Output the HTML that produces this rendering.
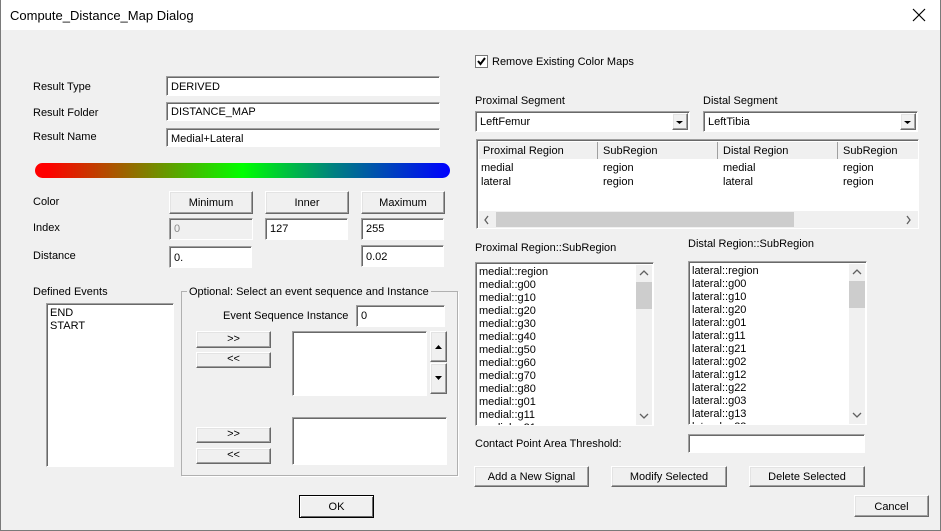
<!DOCTYPE html>
<html><head><meta charset="utf-8"><style>
*{box-sizing:border-box;margin:0;padding:0}
body{width:941px;height:531px;overflow:hidden;background:#f0f0f0;font-family:"Liberation Sans",sans-serif;font-size:11px;color:#000;position:relative}
.a{position:absolute;white-space:nowrap}
.win{position:absolute;left:0;top:0;width:941px;height:531px;border:1px solid #7a7a7a;border-top:none}
.title{position:absolute;left:0;top:0;width:940px;height:30px;background:#fff}
.in{position:absolute;background:#fff;border:1px solid;border-color:#a0a0a0 #fff #fff #a0a0a0;box-shadow:inset 1px 1px 0 #696969;padding:4px 0 0 4px}
.btn{position:absolute;background:#f0f0f0;border:1px solid;border-color:#fff #696969 #696969 #fff;box-shadow:inset -1px -1px 0 #a0a0a0, inset 1px 1px 0 #e3e3e3;text-align:center}
.lst{position:absolute;background:#fff;border:1px solid;border-color:#a0a0a0 #fff #fff #a0a0a0;box-shadow:inset 1px 1px 0 #696969;overflow:hidden}
.lst div{line-height:13px;padding-left:3px}
.sb{position:absolute;background:#f0f0f0}
</style></head><body>
<div class="title"></div>
<div class="a" style="left:10px;top:8px;font-size:13px">Compute_Distance_Map Dialog</div>
<svg class="a" style="left:912px;top:8px" width="14" height="14"><path d="M1 1L13 13M13 1L1 13" stroke="#000" stroke-width="1.2"/></svg>
<div class="win"></div>

<div class="a" style="left:33px;top:81px">Result Type</div>
<div class="a" style="left:33px;top:107px">Result Folder</div>
<div class="a" style="left:33px;top:131px">Result Name</div>
<div class="in" style="left:166px;top:76px;width:274px;height:20px">DERIVED</div>
<div class="in" style="left:166px;top:102px;width:274px;height:19px;padding-top:3px">DISTANCE_MAP</div>
<div class="in" style="left:166px;top:128px;width:274px;height:19px;padding-top:4px">Medial+Lateral</div>
<div class="a" style="left:35px;top:163px;width:415px;height:15px;border-radius:8px;background:linear-gradient(90deg,#f00 0%,#f00 3%,#808000 27%,#0f0 50%,#008080 72%,#00f 100%)"></div>

<div class="a" style="left:33px;top:196px">Color</div>
<div class="a" style="left:33px;top:222px">Index</div>
<div class="a" style="left:33px;top:250px">Distance</div>
<div class="btn" style="left:169px;top:191px;width:84px;height:23px;padding-top:5px">Minimum</div>
<div class="btn" style="left:265px;top:191px;width:84px;height:23px;padding-top:5px">Inner</div>
<div class="btn" style="left:361px;top:191px;width:84px;height:23px;padding-top:5px">Maximum</div>
<div class="in" style="left:169px;top:218px;width:84px;height:22px;background:#f0f0f0;color:#8a8a8a">0</div>
<div class="in" style="left:265px;top:218px;width:83px;height:22px">127</div>
<div class="in" style="left:361px;top:218px;width:83px;height:22px">255</div>
<div class="in" style="left:169px;top:246px;width:83px;height:22px;padding-top:5px">0.</div>
<div class="in" style="left:361px;top:245px;width:83px;height:22px;padding-top:5px">0.02</div>

<div class="a" style="left:33px;top:286px">Defined Events</div>
<div class="lst" style="left:46px;top:303px;width:128px;height:164px;padding-top:3px"><div>END</div><div>START</div></div>

<div class="a" style="left:181px;top:291px;width:277px;height:185px;border:1px solid #b0b0b0;box-shadow:1px 1px 0 #fff"></div>
<div class="a" style="left:187px;top:286px;background:#f0f0f0;padding:0 2px">Optional: Select an event sequence and Instance</div>
<div class="a" style="left:223px;top:310px">Event Sequence Instance</div>
<div class="in" style="left:356px;top:305px;width:89px;height:22px">0</div>
<div class="btn" style="left:196px;top:331px;width:75px;height:17px;line-height:14px">&gt;&gt;</div>
<div class="btn" style="left:196px;top:352px;width:75px;height:16px;line-height:13px">&lt;&lt;</div>
<div class="lst" style="left:292px;top:331px;width:135px;height:65px"></div>
<div class="btn" style="left:430px;top:331px;width:17px;height:31px"><svg width="15" height="29"><path d="M4 17L11 17L7.5 13Z" fill="#000"/></svg></div>
<div class="btn" style="left:430px;top:363px;width:17px;height:31px"><svg width="15" height="29"><path d="M4 12L11 12L7.5 16Z" fill="#000"/></svg></div>
<div class="btn" style="left:196px;top:427px;width:75px;height:16px;line-height:13px">&gt;&gt;</div>
<div class="btn" style="left:196px;top:448px;width:75px;height:16px;line-height:13px">&lt;&lt;</div>
<div class="lst" style="left:292px;top:417px;width:155px;height:48px"></div>
<div class="btn" style="left:299px;top:495px;width:75px;height:23px;padding-top:5px;border-color:#000;box-shadow:inset 1px 1px 0 #fff,inset -1px -1px 0 #696969">OK</div>

<svg class="a" style="left:475px;top:55px" width="13" height="13"><rect x="0.5" y="0.5" width="12" height="12" fill="#fff" stroke="#777"/><path d="M3 6L5.5 9L10 3" stroke="#000" stroke-width="2" fill="none"/></svg>
<div class="a" style="left:492px;top:56px">Remove Existing Color Maps</div>

<div class="a" style="left:475px;top:95px">Proximal Segment</div>
<div class="a" style="left:703px;top:95px">Distal Segment</div>
<div class="in" style="left:475px;top:111px;width:215px;height:21px">LeftFemur</div>
<div class="btn" style="left:672px;top:113px;width:16px;height:17px"><svg width="14" height="15"><path d="M3 7L10 7L6.5 10Z" fill="#000"/></svg></div>
<div class="in" style="left:703px;top:111px;width:215px;height:21px">LeftTibia</div>
<div class="btn" style="left:900px;top:113px;width:16px;height:17px"><svg width="14" height="15"><path d="M3 7L10 7L6.5 10Z" fill="#000"/></svg></div>

<div class="lst" style="left:476px;top:139px;width:443px;height:90px">
 <div class="a" style="left:2px;top:2px;width:439px;height:17px;background:#f0f0f0;padding:0"></div>
 <div class="a" style="left:6px;top:5px;padding:0">Proximal Region</div>
 <div class="a" style="left:120px;top:2px;width:1px;height:17px;background:#a0a0a0;padding:0"></div>
 <div class="a" style="left:126px;top:5px;padding:0">SubRegion</div>
 <div class="a" style="left:240px;top:2px;width:1px;height:17px;background:#a0a0a0;padding:0"></div>
 <div class="a" style="left:246px;top:5px;padding:0">Distal Region</div>
 <div class="a" style="left:360px;top:2px;width:1px;height:17px;background:#a0a0a0;padding:0"></div>
 <div class="a" style="left:366px;top:5px;padding:0">SubRegion</div>
 <div class="a" style="left:4px;top:22px;padding:0">medial</div><div class="a" style="left:126px;top:22px;padding:0">region</div><div class="a" style="left:246px;top:22px;padding:0">medial</div><div class="a" style="left:366px;top:22px;padding:0">region</div>
 <div class="a" style="left:4px;top:36px;padding:0">lateral</div><div class="a" style="left:126px;top:36px;padding:0">region</div><div class="a" style="left:246px;top:36px;padding:0">lateral</div><div class="a" style="left:366px;top:36px;padding:0">region</div>
 <div class="a" style="left:2px;top:71px;width:439px;height:17px;background:#f0f0f0;padding:0"></div>
 <div class="a" style="left:19px;top:72px;width:298px;height:15px;background:#cdcdcd;padding:0"></div>
 <svg class="a" style="left:6px;top:75px" width="8" height="10"><path d="M5 1L2 5L5 9" stroke="#606060" stroke-width="1.3" fill="none"/></svg>
 <svg class="a" style="left:428px;top:75px" width="8" height="10"><path d="M2 1L5 5L2 9" stroke="#606060" stroke-width="1.3" fill="none"/></svg>
</div>

<div class="a" style="left:475px;top:242px">Proximal Region::SubRegion</div>
<div class="a" style="left:688px;top:238px">Distal Region::SubRegion</div>
<div class="lst" style="left:475px;top:262px;width:179px;height:164px;padding-top:3px">
<div>medial::region</div><div>medial::g00</div><div>medial::g10</div><div>medial::g20</div><div>medial::g30</div><div>medial::g40</div><div>medial::g50</div><div>medial::g60</div><div>medial::g70</div><div>medial::g80</div><div>medial::g01</div><div>medial::g11</div><div>medial::g21</div>
<div class="sb" style="position:absolute;left:160px;top:2px;width:16px;height:160px;padding:0"></div>
<div class="a" style="left:160px;top:19px;width:16px;height:27px;background:#cdcdcd;padding:0"></div>
<svg class="a" style="left:163px;top:6px;padding:0" width="10" height="8"><path d="M1 6L5 2L9 6" stroke="#606060" stroke-width="1.3" fill="none"/></svg>
<svg class="a" style="left:163px;top:149px;padding:0" width="10" height="8"><path d="M1 2L5 6L9 2" stroke="#606060" stroke-width="1.3" fill="none"/></svg>
</div>
<div class="lst" style="left:688px;top:261px;width:179px;height:164px;padding-top:3px">
<div>lateral::region</div><div>lateral::g00</div><div>lateral::g10</div><div>lateral::g20</div><div>lateral::g01</div><div>lateral::g11</div><div>lateral::g21</div><div>lateral::g02</div><div>lateral::g12</div><div>lateral::g22</div><div>lateral::g03</div><div>lateral::g13</div><div>lateral::g23</div>
<div class="sb" style="position:absolute;left:160px;top:2px;width:16px;height:160px;padding:0"></div>
<div class="a" style="left:160px;top:19px;width:16px;height:27px;background:#cdcdcd;padding:0"></div>
<svg class="a" style="left:163px;top:6px;padding:0" width="10" height="8"><path d="M1 6L5 2L9 6" stroke="#606060" stroke-width="1.3" fill="none"/></svg>
<svg class="a" style="left:163px;top:149px;padding:0" width="10" height="8"><path d="M1 2L5 6L9 2" stroke="#606060" stroke-width="1.3" fill="none"/></svg>
</div>

<div class="a" style="left:475px;top:438px">Contact Point Area Threshold:</div>
<div class="in" style="left:688px;top:434px;width:177px;height:19px"></div>
<div class="btn" style="left:474px;top:466px;width:115px;height:21px;padding-top:4px">Add a New Signal</div>
<div class="btn" style="left:611px;top:466px;width:116px;height:21px;padding-top:4px">Modify Selected</div>
<div class="btn" style="left:749px;top:466px;width:116px;height:21px;padding-top:4px">Delete Selected</div>
<div class="btn" style="left:854px;top:495px;width:75px;height:22px;padding-top:5px">Cancel</div>
</body></html>
